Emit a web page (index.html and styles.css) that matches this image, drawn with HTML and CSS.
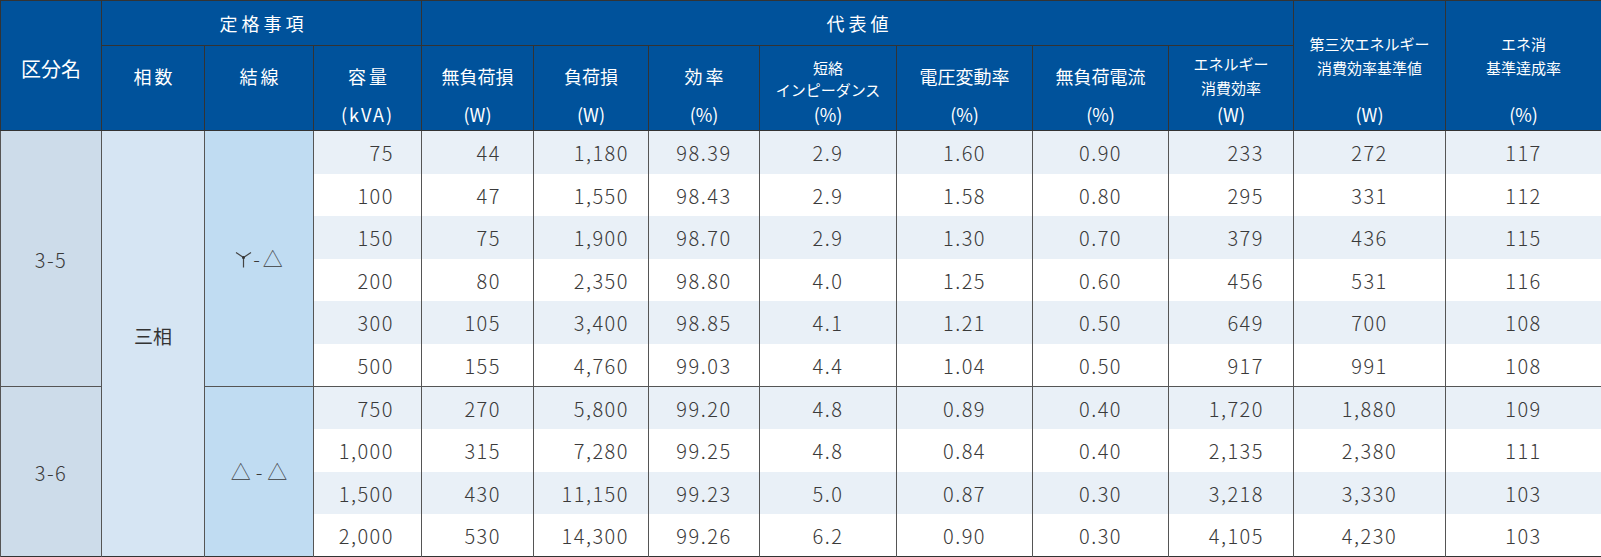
FILE: index.html
```html
<!DOCTYPE html>
<html lang="ja">
<head>
<meta charset="utf-8">
<title>代表値</title>
<link rel="stylesheet" href="styles.css">
</head>
<body>
<table class="spec">
  <colgroup>
    <col class="c1"><col class="c2"><col class="c3"><col class="c4"><col class="c5"><col class="c6"><col class="c7"><col class="c8"><col class="c9"><col class="c10"><col class="c11"><col class="c12"><col class="c13">
  </colgroup>
  <thead>
    <tr class="h1">
      <th rowspan="2" class="kubun">区分名</th>
      <th colspan="3" class="group">定格事項</th>
      <th colspan="7" class="group">代表値</th>
      <th rowspan="2" class="tall"><span class="lbl">第三次エネルギー<br>消費効率基準値</span><span class="unit">(W)</span></th>
      <th rowspan="2" class="tall"><span class="lbl">エネ消<br>基準達成率</span><span class="unit">(%)</span></th>
    </tr>
    <tr class="h2">
      <th class="spaced"><span class="lbl">相数</span></th>
      <th class="spaced"><span class="lbl">結線</span></th>
      <th class="spaced"><span class="lbl">容量</span><span class="unit kva">(kVA)</span></th>
      <th><span class="lbl">無負荷損</span><span class="unit">(W)</span></th>
      <th><span class="lbl">負荷損</span><span class="unit">(W)</span></th>
      <th class="spaced"><span class="lbl">効率</span><span class="unit">(%)</span></th>
      <th class="two"><span class="lbl">短絡<br>インピーダンス</span><span class="unit">(%)</span></th>
      <th><span class="lbl">電圧変動率</span><span class="unit">(%)</span></th>
      <th><span class="lbl">無負荷電流</span><span class="unit">(%)</span></th>
      <th class="two eff"><span class="lbl">エネルギー<br>消費効率</span><span class="unit">(W)</span></th>
    </tr>
  </thead>
  <tbody>
    <tr class="odd tall43">
      <td rowspan="6" class="k">3-5</td>
      <td rowspan="10" class="phase">三相</td>
      <td rowspan="6" class="wire"><span class="wye" role="img" aria-label="Y"><svg width="17" height="17" viewBox="0 0 17 17"><path d="M1 1.5 L8.5 6.5 L16 1.5 M8.5 6.5 L8.5 16.5" fill="none" stroke="#444" stroke-width="1.2"/><circle cx="8.5" cy="6.6" r="1.5" fill="#333"/></svg></span><span class="dash">-</span><span class="tri">△</span></td>
      <td class="r r1">75</td><td class="r r2">44</td><td class="r r3">1,180</td><td>98.39</td><td>2.9</td><td>1.60</td><td>0.90</td><td class="r r4">233</td><td>272</td><td>117</td>
    </tr>
    <tr class="even">
      <td class="r r1">100</td><td class="r r2">47</td><td class="r r3">1,550</td><td>98.43</td><td>2.9</td><td>1.58</td><td>0.80</td><td class="r r4">295</td><td>331</td><td>112</td>
    </tr>
    <tr class="odd tall43">
      <td class="r r1">150</td><td class="r r2">75</td><td class="r r3">1,900</td><td>98.70</td><td>2.9</td><td>1.30</td><td>0.70</td><td class="r r4">379</td><td>436</td><td>115</td>
    </tr>
    <tr class="even">
      <td class="r r1">200</td><td class="r r2">80</td><td class="r r3">2,350</td><td>98.80</td><td>4.0</td><td>1.25</td><td>0.60</td><td class="r r4">456</td><td>531</td><td>116</td>
    </tr>
    <tr class="odd tall43">
      <td class="r r1">300</td><td class="r r2">105</td><td class="r r3">3,400</td><td>98.85</td><td>4.1</td><td>1.21</td><td>0.50</td><td class="r r4">649</td><td>700</td><td>108</td>
    </tr>
    <tr class="even">
      <td class="r r1">500</td><td class="r r2">155</td><td class="r r3">4,760</td><td>99.03</td><td>4.4</td><td>1.04</td><td>0.50</td><td class="r r4">917</td><td>991</td><td>108</td>
    </tr>
    <tr class="odd sep">
      <td rowspan="4" class="k">3-6</td>
      <td rowspan="4" class="wire"><span class="tri">△</span><span class="dash2">-</span><span class="tri">△</span></td>
      <td class="r r1">750</td><td class="r r2">270</td><td class="r r3">5,800</td><td>99.20</td><td>4.8</td><td>0.89</td><td>0.40</td><td class="r r4">1,720</td><td>1,880</td><td>109</td>
    </tr>
    <tr class="even tall43">
      <td class="r r1">1,000</td><td class="r r2">315</td><td class="r r3">7,280</td><td>99.25</td><td>4.8</td><td>0.84</td><td>0.40</td><td class="r r4">2,135</td><td>2,380</td><td>111</td>
    </tr>
    <tr class="odd">
      <td class="r r1">1,500</td><td class="r r2">430</td><td class="r r3">11,150</td><td>99.23</td><td>5.0</td><td>0.87</td><td>0.30</td><td class="r r4">3,218</td><td>3,330</td><td>103</td>
    </tr>
    <tr class="even">
      <td class="r r1">2,000</td><td class="r r2">530</td><td class="r r3">14,300</td><td>99.26</td><td>6.2</td><td>0.90</td><td>0.30</td><td class="r r4">4,105</td><td>4,230</td><td>103</td>
    </tr>
  </tbody>
</table>
</body>
</html>
```

FILE: styles.css
```css
html, body {
  margin: 0;
  padding: 0;
  background: #ffffff;
}

.spec {
  width: 1601px;
  table-layout: fixed;
  border-collapse: collapse;
  border: 1px solid #333;
  font-family: "Noto Sans CJK JP", "Noto Sans", sans-serif;
}

.c1 { width: 101px; }
.c2 { width: 103px; }
.c3 { width: 109px; }
.c4 { width: 108px; }
.c5 { width: 112px; }
.c6 { width: 115px; }
.c7 { width: 111px; }
.c8 { width: 137px; }
.c9 { width: 136px; }
.c10 { width: 136px; }
.c11 { width: 125px; }
.c12 { width: 152px; }
.c13 { width: 156px; }

.spec th {
  background: #00529b;
  color: #ffffff;
  font-weight: 400;
  border: 1px solid #333;
  padding: 0;
  vertical-align: top;
  text-align: center;
  font-size: 18px;
}

.spec th .lbl {
  display: block;
  line-height: 24px;
}

.spec th .unit {
  display: block;
  line-height: 24px;
  font-size: 18px;
}

.h1 { height: 45px; }
.h2 { height: 85px; }

.spec th.group {
  vertical-align: middle;
  letter-spacing: 4px;
  padding-left: 4px;
}

.spec th.kubun {
  vertical-align: middle;
  font-size: 20px;
  padding-top: 6px;
}

.h2 th {
  padding-top: 18px;
}

.h2 th .unit {
  margin-top: 14px;
}

.h2 th.spaced .lbl {
  letter-spacing: 3px;
  padding-left: 3px;
}

.h2 th .kva {
  letter-spacing: 2px;
}

.h2 th.two {
  padding-top: 11px;
}

.h2 th.two .lbl {
  font-size: 15px;
  line-height: 22px;
}

.h2 th.two .unit {
  margin-top: 1px;
}

.h2 th.eff {
  padding-top: 6px;
}

.h2 th.eff .lbl {
  line-height: 24px;
}

.h2 th.eff .unit {
  margin-top: 2px;
}

.spec th.tall {
  padding-top: 31px;
}

.spec th.tall .lbl {
  font-size: 15px;
  line-height: 24px;
}

.spec th.tall .unit {
  margin-top: 22px;
}

.spec td {
  border-left: 1px solid #555;
  border-right: 1px solid #555;
  border-top: none;
  border-bottom: none;
  padding: 0;
  text-align: center;
  vertical-align: middle;
  font-size: 20px;
  font-weight: 300;
  color: #3a3a3a;
  letter-spacing: 1.5px;
  height: 42px;
}

.spec tr.tall43 td {
  height: 43px;
}

.spec tr.tall43 td[rowspan] {
  height: auto;
}

.spec tr.sep td {
  border-top: 1px solid #555;
}

.odd td { background: #e9f0f7; }
.even td { background: #ffffff; }

.spec td.k {
  background: #cddcea;
  padding-top: 2px;
}

.spec td.phase {
  background: #d6e5f3;
  padding-bottom: 16px;
  letter-spacing: 0;
  font-weight: 400;
  color: #333;
  font-size: 19px;
}

.spec td.wire {
  background: #c0dcf2;
  letter-spacing: 0;
}

.spec td.r { text-align: right; }
.spec td.r1 { padding-right: 27px; }
.spec td.r2 { padding-right: 32px; }
.spec td.r3 { padding-right: 19px; }
.spec td.r4 { padding-right: 29px; }

.wye {
  display: inline-block;
  vertical-align: -1px;
}

.wye svg {
  display: block;
}

.dash {
  margin: 0 3px 0 1px;
}

.dash2 {
  margin: 0 5px;
}

.tri {
  font-size: 20px;
}
```
